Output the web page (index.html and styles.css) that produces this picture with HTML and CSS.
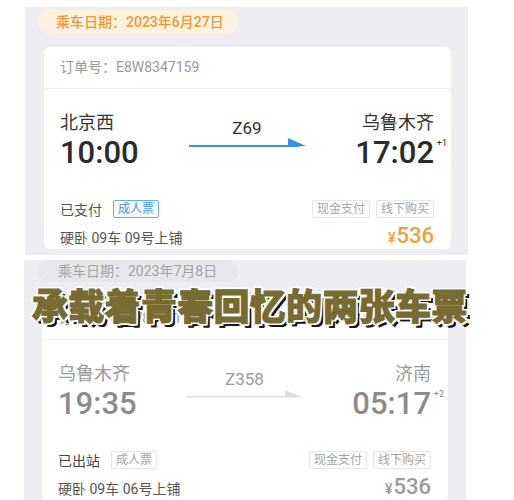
FILE: index.html
```html
<!DOCTYPE html>
<html lang="zh-CN">
    <head>
        <meta charset="utf-8">
        <title>两张车票</title>
        <link rel="stylesheet" href="styles.css">
    </head>
    <body>
        <div class="shot">
            <div class="date-pill">乘车日期：2023年6月27日</div>
            <div class="ticket">
                <div class="ticket-head">订单号：E8W8347159</div>
                <div class="ticket-body">
                    <div class="route">
                        <div class="stop">
                            <div class="station">北京西</div>
                            <div class="time">10:00</div>
                        </div>
                        <div class="train">
                            <div class="train-no">Z69</div>
                            <svg class="arrow" width="117" height="10" viewBox="0 0 117 10">
                                <rect x="0" y="7" width="110" height="2"></rect>
                                <polygon points="99,0 117,8 99,9"></polygon>
                            </svg>
                        </div>
                        <div class="stop stop-end">
                            <div class="station">乌鲁木齐</div>
                            <div class="time">17:02<span class="plus">+1</span></div>
                        </div>
                    </div>
                    <div class="meta">
                        <div class="status">已支付<span class="tag tag-blue">成人票</span></div>
                        <div class="tags">
                            <span class="tag">现金支付</span>
                            <span class="tag">线下购买</span>
                        </div>
                    </div>
                    <div class="meta meta-seat">
                        <div class="seat">硬卧 09车 09号上铺</div>
                        <div class="price"><span class="yen">¥</span>536</div>
                    </div>
                </div>
            </div>
        </div>

        <div class="shot shot-past">
            <div class="date-pill">乘车日期：2023年7月8日</div>
            <div class="ticket">
                <div class="ticket-head">订单号：E8W8347159</div>
                <div class="ticket-body">
                    <div class="route">
                        <div class="stop">
                            <div class="station">乌鲁木齐</div>
                            <div class="time">19:35</div>
                        </div>
                        <div class="train">
                            <div class="train-no">Z358</div>
                            <svg class="arrow" width="117" height="10" viewBox="0 0 117 10">
                                <rect x="0" y="7" width="110" height="1.5"></rect>
                                <polygon points="99,1 117,8 99,8.5"></polygon>
                            </svg>
                        </div>
                        <div class="stop stop-end">
                            <div class="station">济南</div>
                            <div class="time">05:17<span class="plus">+2</span></div>
                        </div>
                    </div>
                    <div class="meta">
                        <div class="status">已出站<span class="tag">成人票</span></div>
                        <div class="tags">
                            <span class="tag">现金支付</span>
                            <span class="tag">线下购买</span>
                        </div>
                    </div>
                    <div class="meta meta-seat">
                        <div class="seat">硬卧 09车 06号上铺</div>
                        <div class="price"><span class="yen">¥</span>536</div>
                    </div>
                </div>
            </div>
        </div>

        <div class="caption">承载着青春回忆的两张车票</div>
    </body>
</html>
```

FILE: styles.css
```css
* {
    box-sizing: border-box;
}

body {
    margin: 0;
    background-color: white;
    font-family: Roboto, "Noto Sans CJK SC", sans-serif;
    position: relative;
    height: 500px;
    overflow: hidden;
}

/* one phone screenshot */
.shot {
    margin: 7px 0 0 25px;
    width: 443px;
    height: 248px;
    padding-top: 3px;
    background-color: #eeeef2;
    overflow: hidden;
}

.date-pill {
    margin-left: 13px;
    width: 200px;
    height: 24px;
    line-height: 24px;
    padding-left: 18px;
    border-radius: 12px;
    background-color: #fdf1df;
    color: #e89b3a;
    font-size: 14px;
    font-weight: 500;
}

.ticket {
    margin: 13px 0 0 19px;
    width: 407px;
    background-color: white;
    border-radius: 6px;
}

.ticket-head {
    height: 42px;
    line-height: 40px;
    padding-left: 16px;
    border-bottom: 1px solid #f0f0f2;
    color: #9a9a9a;
    font-size: 14px;
}

.ticket-body {
    padding: 22px 17px 0 16px;
}

.route {
    display: grid;
    grid-template-columns: 1fr 117px 1fr;
}

.station {
    font-size: 18px;
    line-height: 24px;
    color: #333;
}

.time {
    position: relative;
    display: inline-block;
    font-size: 31px;
    line-height: 36px;
    font-weight: 500;
    color: #2b2b2b;
}

.stop-end {
    text-align: right;
}

.plus {
    position: absolute;
    right: -13px;
    top: 3px;
    font-size: 9px;
    line-height: 10px;
    font-weight: 400;
}

.train {
    padding-top: 8px;
    text-align: center;
}

.train-no {
    font-size: 17px;
    line-height: 18px;
    color: #333;
}

.arrow {
    display: block;
    margin-top: 1px;
    fill: #3d8fe6;
}

.meta {
    display: flex;
    justify-content: space-between;
    align-items: center;
    margin-top: 28px;
    height: 20px;
}

.status {
    display: flex;
    align-items: center;
    gap: 11px;
    font-size: 14px;
    color: #555;
}

.tags {
    display: flex;
    gap: 6px;
}

.tag {
    display: inline-block;
    height: 18px;
    line-height: 16px;
    padding: 0 4px;
    border: 1px solid #e6e6e8;
    border-radius: 2px;
    font-size: 12px;
    color: #a3a3a3;
}

.tag-blue {
    border-color: #6aaae6;
    background-color: #f4f9ff;
    color: #4a94dc;
}

.meta-seat {
    margin-top: 6px;
    height: 24px;
}

.seat {
    font-size: 14px;
    color: #555;
}

.price {
    font-size: 22px;
    line-height: 24px;
    font-weight: 500;
    color: #f0a13b;
}

.yen {
    font-size: 14px;
    margin-right: 1px;
}

/* the second screenshot: an old, finished trip */
.shot-past {
    margin: 5px 0 0 24px;
    width: 442px;
    height: 240px;
    padding-top: 0;
}

.shot-past .date-pill {
    margin-left: 14px;
    height: 22px;
    line-height: 22px;
    padding-left: 20px;
    background-color: #e7e7eb;
    color: #a2a2a2;
    font-weight: 400;
}

.shot-past .ticket {
    margin: 16px 0 0 18px;
    width: 406px;
}

.shot-past .station,
.shot-past .train-no {
    color: #9a9a9a;
}

.shot-past .time {
    color: #8c8c8c;
}

.shot-past .arrow {
    fill: #dedede;
}

.shot-past .status {
    color: #444;
}

.shot-past .seat {
    color: #555;
}

.shot-past .price {
    color: #9a9a9a;
}

.caption {
    position: absolute;
    top: 284px;
    left: 32px;
    font-family: "Noto Sans CJK SC", sans-serif;
    font-size: 36px;
    line-height: 40px;
    font-weight: 900;
    letter-spacing: 0.3px;
    color: #786a33;
    -webkit-text-stroke: 1px #786a33;
    text-shadow:
        -2px -2px 0 #fff, 2px -2px 0 #fff,
        -2px 2px 0 #fff, 2px 2px 0 #fff,
        0 -2px 0 #fff, 0 2px 0 #fff,
        -2px 0 0 #fff, 2px 0 0 #fff,
        3.5px 3.5px 0 #1a1a1a, 4px 4px 0.5px #000;
}
```
